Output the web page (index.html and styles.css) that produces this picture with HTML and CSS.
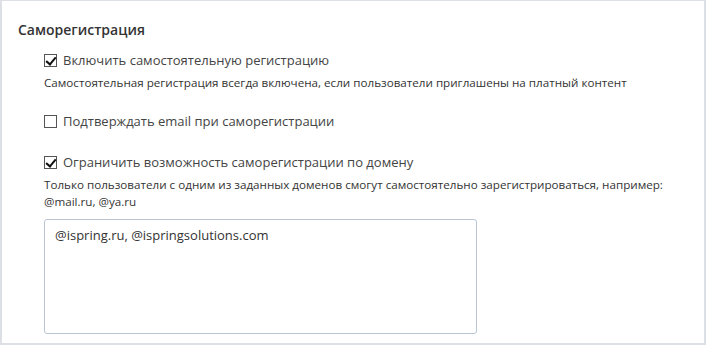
FILE: index.html
```html
<!DOCTYPE html>
<html lang="ru">
<head>
    <meta charset="UTF-8">
    <title>Саморегистрация</title>
    <link rel="stylesheet" href="styles.css">
</head>
<body>

    <!-- Self-registration panel -->
    <div class="panel">
        <h2>Саморегистрация</h2>

        <div class="option">
            <label class="check">
                <input type="checkbox" checked>
                <span class="box"></span>
                Включить самостоятельную регистрацию
            </label>
            <p class="hint">Самостоятельная регистрация всегда включена, если пользователи приглашены на платный контент</p>
        </div>

        <div class="option option-wide">
            <label class="check">
                <input type="checkbox">
                <span class="box"></span>
                Подтверждать email при саморегистрации
            </label>
        </div>

        <div class="option">
            <label class="check">
                <input type="checkbox" checked>
                <span class="box"></span>
                Ограничить возможность саморегистрации по домену
            </label>
            <p class="hint">Только пользователи с одним из заданных доменов смогут самостоятельно зарегистрироваться, например:<br>@mail.ru, @ya.ru</p>
            <textarea class="domains">@ispring.ru, @ispringsolutions.com</textarea>
        </div>
    </div>

</body>
</html>
```

FILE: styles.css
```css
* {
    margin: 0;
    padding: 0;
    box-sizing: border-box;
}

body {
    font-family: 'Open Sans', 'Segoe UI', sans-serif;
    background-color: #fff;
    color: #333;
}

/* Panel */
.panel {
    width: 706px;
    height: 345px;
    border: 2px solid #dcdfe3;
    border-top-width: 1px;
    padding: 19px 0 0 16px;
}

.panel h2 {
    font-size: 14px;
    font-weight: 600;
    color: #333;
    margin-bottom: 12px;
}

.option {
    padding-left: 26px;
    margin-bottom: 21px;
}

.option-wide {
    margin-bottom: 23px;
}

/* Checkbox */
.check {
    display: flex;
    align-items: center;
    gap: 6px;
    font-size: 13px;
    color: #444;
    line-height: 18px;
    cursor: pointer;
}

.check input {
    display: none;
}

.check .box {
    width: 13px;
    height: 13px;
    border: 1px solid #555;
    position: relative;
    flex-shrink: 0;
}

.check input:checked + .box::after {
    content: "";
    position: absolute;
    left: 3px;
    top: 0;
    width: 4px;
    height: 8px;
    border-right: 2px solid #111;
    border-bottom: 2px solid #111;
    transform: rotate(40deg);
}

.hint {
    font-size: 11.65px;
    color: #333;
    line-height: 17px;
    margin-top: 5px;
}

/* Domains textarea */
.domains {
    display: block;
    width: 433px;
    height: 115px;
    margin-top: 9px;
    padding: 6px 10px;
    border: 1px solid #b9c6d2;
    border-radius: 3px;
    font-family: inherit;
    font-size: 13px;
    color: #333;
    resize: none;
}
```
